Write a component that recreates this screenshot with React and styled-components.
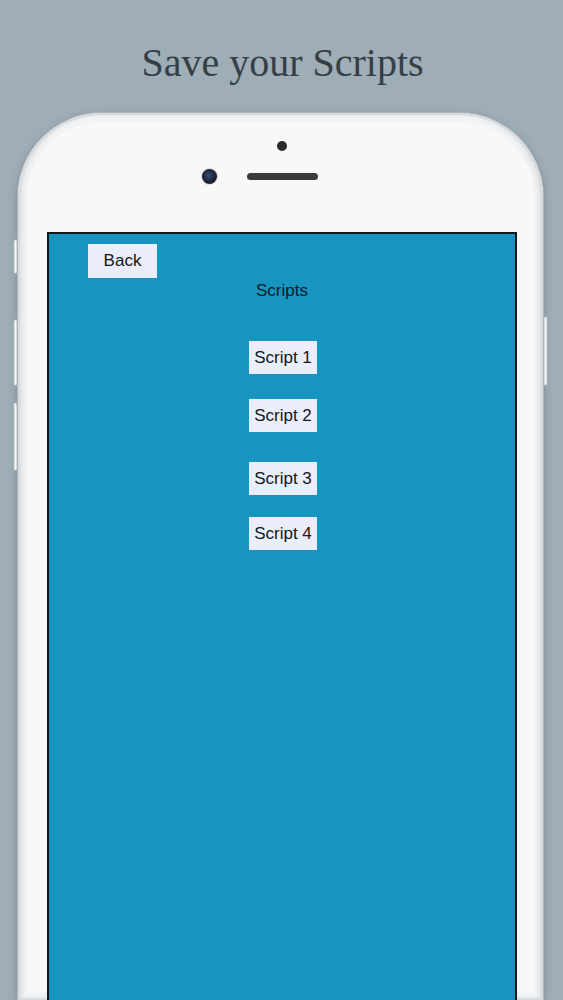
import styled, { createGlobalStyle } from 'styled-components'

const GlobalStyle = createGlobalStyle`
  html, body {
    margin: 0;
    padding: 0;
    height: 100%;
    overflow: hidden;
    background: #9eadb6;
  }
  body {
    font-family: "Liberation Sans", Arial, sans-serif;
  }
`

const scripts = [
  { name: 'Script 1', space: 0 },
  { name: 'Script 2', space: 25 },
  { name: 'Script 3', space: 30 },
  { name: 'Script 4', space: 22 },
]

function App() {
  return (
    <Page>
      <GlobalStyle />
      <Title>Save your Scripts</Title>
      <Phone>
        <SideKey $side="left" $top={127} $height={33} />
        <SideKey $side="left" $top={207} $height={65} />
        <SideKey $side="left" $top={290} $height={67} />
        <SideKey $side="right" $top={204} $height={68} />
        <Sensor />
        <EarRow>
          <Camera />
          <Speaker />
          <Spacer />
        </EarRow>
        <Screen>
          <TopBar>
            <BackButton>Back</BackButton>
          </TopBar>
          <Heading>Scripts</Heading>
          <List>
            {scripts.map((s) => (
              <ScriptButton key={s.name} $space={s.space}>{s.name}</ScriptButton>
            ))}
          </List>
        </Screen>
      </Phone>
    </Page>
  )
}

export default App

const Page = styled.div`
  height: 1000px;
  display: flex;
  flex-direction: column;
  align-items: center;
  overflow: hidden;
`

const Title = styled.h1`
  margin: 0;
  padding-top: 40px;
  height: 75px;
  box-sizing: border-box;
  font-family: "Liberation Serif", "Times New Roman", serif;
  font-weight: 400;
  font-size: 40px;
  line-height: 46px;
  color: #343f47;
  letter-spacing: 0;
  margin-left: 2px;
`

const Phone = styled.div`
  position: relative;
  width: 525px;
  height: 1000px;
  margin-top: 38px;
  margin-right: 2px;
  box-sizing: border-box;
  border-radius: 84px 84px 0 0;
  background: #f8f8f9;
  box-shadow:
    0 0 0 1px #aeb6bc,
    inset 0 0 0 2px #d7dbde,
    inset 4px 0 6px -2px #c9cdd1,
    inset -4px 0 6px -2px #c9cdd1,
    inset 0 0 0 9px #f2f3f4,
    0 3px 8px rgba(40, 50, 60, 0.35);
  display: flex;
  flex-direction: column;
  align-items: center;
`

const SideKey = styled.span`
  position: absolute;
  top: ${(p) => p.$top}px;
  ${(p) => (p.$side === 'left' ? 'left: -4px;' : 'right: -4px;')}
  width: 3px;
  height: ${(p) => p.$height}px;
  border-radius: 2px;
  background: linear-gradient(to right, #c8ced3, #f4f5f6, #c8ced3);
  box-shadow: 0 0 0 1px #aab2b8;
`

const Sensor = styled.span`
  width: 10px;
  height: 10px;
  border-radius: 50%;
  margin-top: 28px;
  margin-left: 3px;
  background: #2b2b2d;
`

const EarRow = styled.div`
  display: flex;
  align-items: center;
  gap: 30px;
  margin-top: 18px;
  margin-left: 4px;
  height: 15px;
`

const Camera = styled.span`
  width: 15px;
  height: 15px;
  border-radius: 50%;
  background: radial-gradient(circle at 45% 45%, #3a4a78 0%, #1a2036 55%, #0e1018 100%);
  box-shadow: 0 0 2px rgba(0, 0, 0, 0.4);
`

const Speaker = styled.span`
  width: 71px;
  height: 7px;
  border-radius: 4px;
  background: #3a3b3e;
`

const Spacer = styled.span`
  width: 15px;
`

const Screen = styled.div`
  margin-top: 48px;
  margin-left: 3px;
  width: 470px;
  flex: 1;
  box-sizing: border-box;
  border: 2px solid #14181c;
  border-bottom: none;
  background: #1795c0;
  display: flex;
  flex-direction: column;
  align-items: center;
`

const TopBar = styled.div`
  align-self: stretch;
  display: flex;
  padding: 10px 0 0 39px;
`

const BackButton = styled.button`
  width: 69px;
  height: 34px;
  border: none;
  padding: 0;
  background: #e9eefa;
  font-family: "Liberation Sans", Arial, sans-serif;
  font-size: 17px;
  color: #161616;
  cursor: pointer;
`

const Heading = styled.div`
  margin-top: 3px;
  font-size: 17px;
  line-height: 20px;
  color: #0a1c26;
`

const List = styled.div`
  display: flex;
  flex-direction: column;
  align-items: center;
  margin-top: 40px;
  margin-left: 2px;
`

const ScriptButton = styled.button`
  width: 68px;
  height: 33px;
  margin-top: ${(p) => p.$space}px;
  border: none;
  padding: 0;
  background: #e9eefa;
  font-family: "Liberation Sans", Arial, sans-serif;
  font-size: 17px;
  color: #161616;
  cursor: pointer;
`
